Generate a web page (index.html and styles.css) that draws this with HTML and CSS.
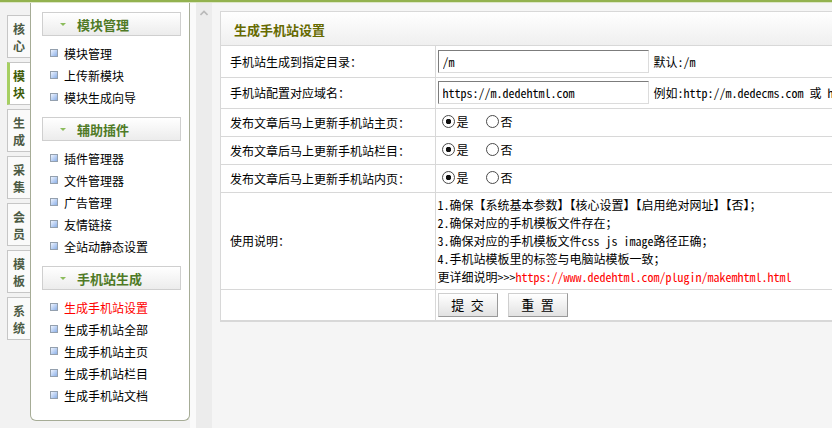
FILE: index.html
```html
<!DOCTYPE html>
<html lang="zh-CN">
<head>
    <meta charset="UTF-8">
    <title>生成手机站设置</title>
    <link rel="stylesheet" href="styles.css">
</head>
<body>
    <div class="topbar"></div>

    <div class="frame">
        <!-- Left column: vertical tabs + menu panel -->
        <div class="side">
            <ul class="tabs">
                <li><span>核</span><span>心</span></li>
                <li class="on"><span>模</span><span>块</span></li>
                <li><span>生</span><span>成</span></li>
                <li><span>采</span><span>集</span></li>
                <li><span>会</span><span>员</span></li>
                <li><span>模</span><span>板</span></li>
                <li><span>系</span><span>统</span></li>
            </ul>

            <div class="menu">
                <div class="menu-head"><span class="arrow"></span>模块管理</div>
                <ul class="menu-list">
                    <li>模块管理</li>
                    <li>上传新模块</li>
                    <li>模块生成向导</li>
                </ul>

                <div class="menu-head"><span class="arrow"></span>辅助插件</div>
                <ul class="menu-list">
                    <li>插件管理器</li>
                    <li>文件管理器</li>
                    <li>广告管理</li>
                    <li>友情链接</li>
                    <li>全站动静态设置</li>
                </ul>

                <div class="menu-head"><span class="arrow"></span>手机站生成</div>
                <ul class="menu-list">
                    <li class="current">生成手机站设置</li>
                    <li>生成手机站全部</li>
                    <li>生成手机站主页</li>
                    <li>生成手机站栏目</li>
                    <li>生成手机站文档</li>
                </ul>
            </div>
            <div class="side-gap"></div>
        </div>

        <!-- Collapse bar -->
        <div class="splitter">
            <svg width="8" height="6" viewBox="0 0 8 6"><path d="M0.5 5 L4 1.5 L7.5 5" fill="none" stroke="#b9b9b9" stroke-width="1.6"/></svg>
        </div>

        <!-- Main content -->
        <div class="main">
            <div class="box">
                <div class="box-title">生成手机站设置</div>
                <table class="form">
                    <colgroup>
                        <col class="col-label">
                        <col>
                    </colgroup>
                    <tr class="row-input">
                        <td>手机站生成到指定目录：</td>
                        <td><input class="txt" type="text" value="/m"><span class="hint">默认:/m</span></td>
                    </tr>
                    <tr class="row-input">
                        <td>手机站配置对应域名：</td>
                        <td><input class="txt" type="text" value="https://m.dedehtml.com"><span class="hint">例如:http://m.dedecms.com 或 h</span></td>
                    </tr>
                    <tr class="row-radio">
                        <td>发布文章后马上更新手机站主页：</td>
                        <td>
                            <label><input type="radio" name="r1" checked>是</label>
                            <label><input type="radio" name="r1">否</label>
                        </td>
                    </tr>
                    <tr class="row-radio">
                        <td>发布文章后马上更新手机站栏目：</td>
                        <td>
                            <label><input type="radio" name="r2" checked>是</label>
                            <label><input type="radio" name="r2">否</label>
                        </td>
                    </tr>
                    <tr class="row-radio">
                        <td>发布文章后马上更新手机站内页：</td>
                        <td>
                            <label><input type="radio" name="r3" checked>是</label>
                            <label><input type="radio" name="r3">否</label>
                        </td>
                    </tr>
                    <tr class="row-notes">
                        <td>使用说明：</td>
                        <td>
                            1.确保【系统基本参数】【核心设置】【启用绝对网址】【否】；<br>
                            2.确保对应的手机模板文件存在；<br>
                            3.确保对应的手机模板文件css js image路径正确；<br>
                            4.手机站模板里的标签与电脑站模板一致；<br>
                            更详细说明&gt;&gt;&gt;<a class="link" href="#">https://www.dedehtml.com/plugin/makemhtml.html</a>
                        </td>
                    </tr>
                    <tr class="row-btn">
                        <td></td>
                        <td>
                            <button class="btn" type="submit">提 交</button>
                            <button class="btn" type="reset">重 置</button>
                        </td>
                    </tr>
                </table>
            </div>
        </div>
    </div>
</body>
</html>
```

FILE: styles.css
```css
* {
    box-sizing: border-box;
}
html, body {
    margin: 0;
    height: 100%;
}
body {
    font-family: "Noto Sans Mono CJK SC", "Noto Sans CJK SC", "Liberation Mono", monospace;
    font-size: 12px;
    color: #000;
    background: #f2f2f2;
    overflow: hidden;
}
ul {
    list-style: none;
    margin: 0;
    padding: 0;
}

.topbar {
    height: 3px;
    background: linear-gradient(#93b24f 0, #93b24f 2px, #dce6c6 2px);
}
.frame {
    display: flex;
    height: 425px;
}

/* left column */
.side {
    display: flex;
    align-items: flex-start;
}
.tabs {
    width: 30px;
    padding: 12px 0 0 7px;
}
.tabs li {
    display: flex;
    flex-direction: column;
    gap: 5px;
    height: 43px;
    margin-bottom: 4px;
    padding: 7px 0 0 5px;
    font-size: 12px;
    line-height: 12px;
    font-weight: bold;
    color: #4c5a44;
    background: #fafafa;
    border: 1px solid #c6c6c6;
    border-right: none;
}
.tabs li.on {
    color: #3f5c08;
    background: #fff;
    border-left: 3px solid #a6cf62;
    padding-left: 3px;
}
.menu {
    width: 160px;
    height: 418px;
    padding: 9px 8px 0 11px;
    background: #fff;
    border: 1px solid #a6ac96;
    border-top: none;
    border-radius: 0 0 6px 6px;
}
.menu-head {
    display: flex;
    align-items: center;
    height: 24px;
    padding-left: 17px;
    font-size: 13px;
    font-weight: bold;
    color: #4f7a26;
    background: linear-gradient(#ffffff, #ececec);
    border: 1px solid #cfcfcf;
}
.arrow {
    width: 0;
    height: 0;
    margin-right: 11px;
    border-left: 3px solid transparent;
    border-right: 3px solid transparent;
    border-top: 3px solid #8cbc5c;
}
.menu-list {
    padding: 6px 0 9px 8px;
}
.menu-list li {
    display: flex;
    align-items: center;
    height: 22px;
}
.menu-list li::before {
    content: "";
    width: 6px;
    height: 6px;
    margin-right: 6px;
    border: 1px solid #94a0ae;
    background: linear-gradient(135deg, #eef4ff, #8cb0e8);
}
.menu-list li.current {
    color: #f00;
}
.side-gap {
    width: 6px;
    height: 100%;
    align-self: stretch;
    background: #fafafa;
}

/* collapse bar */
.splitter {
    width: 16px;
    padding: 7px 0 0 4px;
    background: #ececec;
}
.splitter svg {
    display: block;
}

/* main area */
.main {
    flex: 1;
    padding: 8px 0 0 8px;
    background: #f5f5f5;
    overflow: hidden;
}
.box {
    width: 720px;
    background: #fff;
    border: 1px solid #d8d8d8;
}
.box-title {
    height: 34px;
    line-height: 36px;
    padding-left: 13px;
    font-size: 13px;
    font-weight: bold;
    color: #666a00;
    background: linear-gradient(#ffffff, #efefef);
    border-bottom: 1px solid #d8d8d8;
}
.form {
    width: 100%;
    table-layout: fixed;
    border-collapse: collapse;
}
.col-label {
    width: 214px;
}
.form td {
    padding: 0 0 0 9px;
    border: 1px solid #d8d8d8;
    white-space: nowrap;
}
.form tr:first-child td {
    border-top: none;
}
.form td:first-child {
    border-left: none;
}
.form td + td {
    padding-left: 2px;
}
.row-input td {
    height: 31px;
}
.row-radio td {
    height: 28px;
}
.row-notes td {
    height: 97px;
    line-height: 18px;
}
.row-btn td {
    height: 31px;
}

.txt {
    width: 211px;
    height: 23px;
    margin: 0 5px 0 0;
    padding: 0 4px;
    font: inherit;
    vertical-align: middle;
    border: 1px solid #dcdcdc;
    border-top-color: #7c7c7c;
    border-left-color: #7c7c7c;
    outline: none;
}
.hint {
    vertical-align: middle;
}

.row-radio label {
    display: inline-flex;
    align-items: center;
    margin: 0 11px 0 4px;
}
.row-radio label + label {
    margin-left: 0;
}
.row-radio input {
    appearance: none;
    width: 13px;
    height: 13px;
    margin: 0 2px 0 0;
    border: 1px solid #4a4a4a;
    border-radius: 50%;
    background: #fff;
}
.row-radio input:checked {
    background: radial-gradient(circle, #111 0, #111 2.5px, #fff 3px);
}

.link {
    color: #f00;
    text-decoration: none;
}

.btn {
    width: 60px;
    height: 24px;
    margin: 0 4px 0 0;
    padding: 0;
    font-family: inherit;
    font-size: 13px;
    color: #000;
    background: linear-gradient(#ffffff, #e2e2e2);
    border: 1px solid #cfcfcf;
    border-right-color: #9a9a9a;
    border-bottom-color: #9a9a9a;
}
```
